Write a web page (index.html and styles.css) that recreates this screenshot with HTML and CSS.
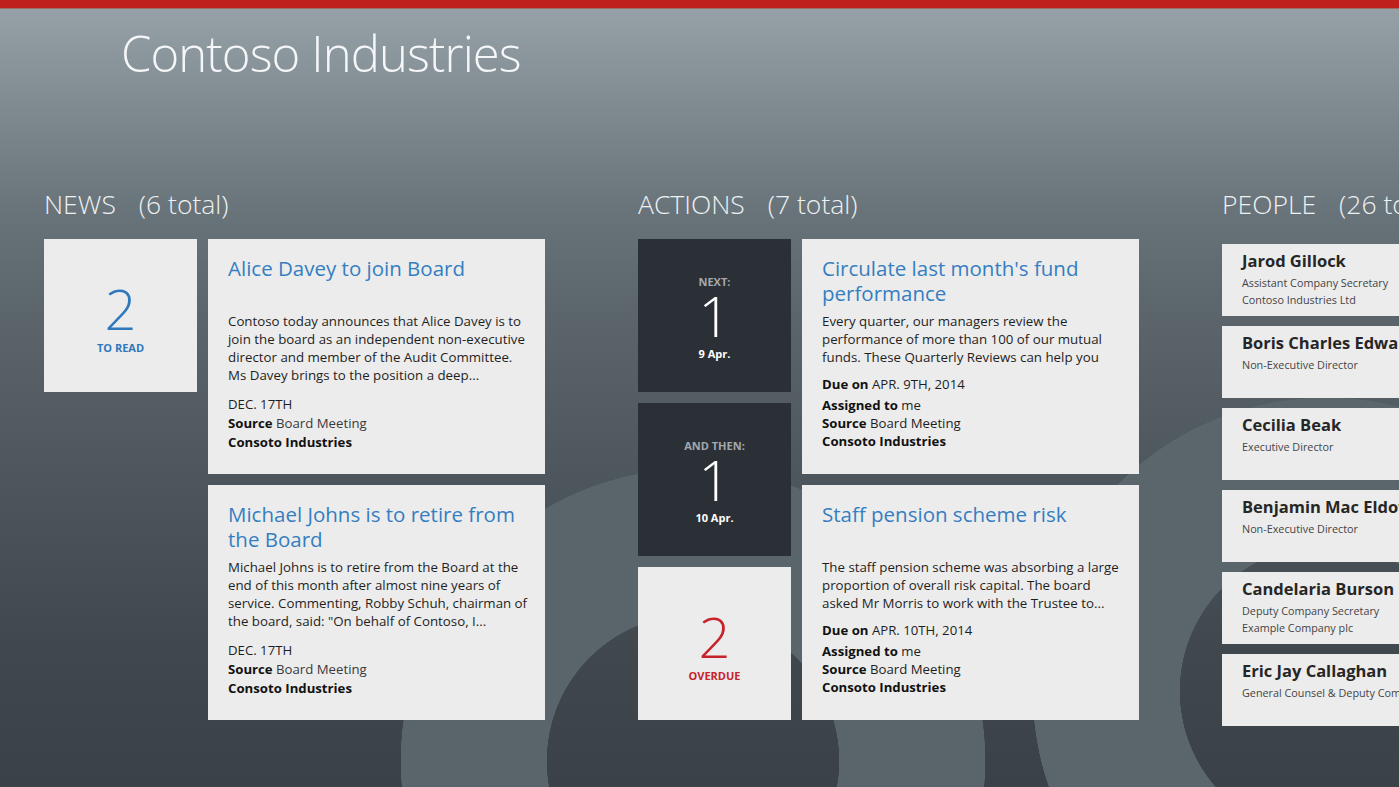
FILE: index.html
```html
<!DOCTYPE html>
<html lang="en">
<head>
<meta charset="utf-8">
<title>Contoso Industries</title>
<link rel="stylesheet" href="styles.css">
</head>
<body>
<div class="topbar"></div>
<header class="app-header">
  <h1 class="app-title">Contoso Industries</h1>
</header>
<main class="hub">
  <section class="group group-news">
    <h2 class="group-title">NEWS<span class="count">(6 total)</span></h2>
    <div class="group-body">
      <div class="tile-col">
        <div class="tile tile-light">
          <div class="tile-big blue">2</div>
          <div class="tile-sub blue">TO READ</div>
        </div>
      </div>
      <div class="card-col">
        <article class="card">
          <h3 class="card-title">Alice Davey to join Board</h3>
          <p class="card-text">Contoso today announces that Alice Davey is to<br>join the board as an independent non-executive<br>director and member of the Audit Committee.<br>Ms Davey brings to the position a deep...</p>
          <div class="meta meta-news">
            <div>DEC. 17TH</div>
            <div><b>Source</b> <span class="soft">Board Meeting</span></div>
            <div><b>Consoto Industries</b></div>
          </div>
        </article>
        <article class="card">
          <h3 class="card-title">Michael Johns is to retire from<br>the Board</h3>
          <p class="card-text">Michael Johns is to retire from the Board at the<br>end of this month after almost nine years of<br>service. Commenting, Robby Schuh, chairman of<br>the board, said: "On behalf of Contoso, I...</p>
          <div class="meta meta-news">
            <div>DEC. 17TH</div>
            <div><b>Source</b> <span class="soft">Board Meeting</span></div>
            <div><b>Consoto Industries</b></div>
          </div>
        </article>
      </div>
    </div>
  </section>

  <section class="group group-actions">
    <h2 class="group-title">ACTIONS<span class="count">(7 total)</span></h2>
    <div class="group-body">
      <div class="tile-col">
        <div class="tile tile-dark">
          <div class="tile-top">NEXT:</div>
          <div class="tile-big">1</div>
          <div class="tile-sub">9 Apr.</div>
        </div>
        <div class="tile tile-dark">
          <div class="tile-top">AND THEN:</div>
          <div class="tile-big">1</div>
          <div class="tile-sub">10 Apr.</div>
        </div>
        <div class="tile tile-light">
          <div class="tile-big red">2</div>
          <div class="tile-sub red">OVERDUE</div>
        </div>
      </div>
      <div class="card-col">
        <article class="card">
          <h3 class="card-title">Circulate last month's fund<br>performance</h3>
          <p class="card-text">Every quarter, our managers review the<br>performance of more than 100 of our mutual<br>funds. These Quarterly Reviews can help you</p>
          <div class="meta meta-action">
            <div class="due"><b>Due on</b> APR. 9TH, 2014</div>
            <div><b>Assigned to</b> me</div>
            <div><b>Source</b> Board Meeting</div>
            <div><b>Consoto Industries</b></div>
          </div>
        </article>
        <article class="card">
          <h3 class="card-title">Staff pension scheme risk</h3>
          <p class="card-text">The staff pension scheme was absorbing a large<br>proportion of overall risk capital. The board<br>asked Mr Morris to work with the Trustee to...</p>
          <div class="meta meta-action">
            <div class="due"><b>Due on</b> APR. 10TH, 2014</div>
            <div><b>Assigned to</b> me</div>
            <div><b>Source</b> Board Meeting</div>
            <div><b>Consoto Industries</b></div>
          </div>
        </article>
      </div>
    </div>
  </section>

  <section class="group group-people">
    <h2 class="group-title">PEOPLE<span class="count">(26 total)</span></h2>
    <div class="people-list">
      <div class="person">
        <div class="person-name">Jarod Gillock</div>
        <div class="person-line">Assistant Company Secretary</div>
        <div class="person-line">Contoso Industries Ltd</div>
      </div>
      <div class="person">
        <div class="person-name">Boris Charles Edwards</div>
        <div class="person-line">Non-Executive Director</div>
      </div>
      <div class="person">
        <div class="person-name">Cecilia Beak</div>
        <div class="person-line">Executive Director</div>
      </div>
      <div class="person">
        <div class="person-name">Benjamin Mac Eldowney</div>
        <div class="person-line">Non-Executive Director</div>
      </div>
      <div class="person">
        <div class="person-name">Candelaria Burson</div>
        <div class="person-line">Deputy Company Secretary</div>
        <div class="person-line">Example Company plc</div>
      </div>
      <div class="person">
        <div class="person-name">Eric Jay Callaghan</div>
        <div class="person-line">General Counsel &amp; Deputy Company Secretary</div>
      </div>
    </div>
  </section>
</main>
</body>
</html>
```

FILE: styles.css
```css
html, body {
  margin: 0;
  padding: 0;
}

body {
  width: 1399px;
  height: 787px;
  overflow: hidden;
  font-family: "Open Sans", "Noto Sans", "Liberation Sans", sans-serif;
  color: #222;
  background:
    radial-gradient(circle at 693px 761px, transparent 146px, #5a656b 146.5px, #5a656b 292px, transparent 292.5px),
    radial-gradient(circle at 1326px 691px, transparent 146px, #5b666c 146.5px, #5b666c 293px, transparent 293.5px),
    linear-gradient(to bottom, #95a1a7 9px, #7e8a90 110px, #68737a 210px, #5a646a 320px, #4c565c 480px, #40484e 650px, #3a4147 787px);
}

.topbar {
  height: 9px;
  background: #c0201b;
  border-bottom: 1px solid #9b6f66;
  box-sizing: border-box;
}

.app-header {
  padding: 20px 0 0 121px;
  height: 162px;
  box-sizing: border-box;
}

.app-title {
  margin: 0;
  font-size: 49px;
  line-height: 49px;
  font-weight: 300;
  color: #f4f6f7;
  letter-spacing: -0.9px;
}

.hub {
  display: flex;
  align-items: flex-start;
  padding-left: 44px;
  padding-top: 20px;
}

.group-news { width: 501px; margin-right: 93px; flex: none; }
.group-actions { width: 501px; margin-right: 83px; flex: none; }
.group-people { flex: none; width: 300px; }

.group-title {
  margin: 0 0 22px;
  font-size: 26.5px;
  line-height: 26px;
  font-weight: 300;
  color: #eef1f2;
  white-space: nowrap;
}

.count {
  margin-left: 23px;
}

.group-body {
  display: flex;
  gap: 11px;
}

.tile-col {
  display: flex;
  flex-direction: column;
  gap: 11px;
  width: 153px;
  flex: none;
}

.card-col {
  display: flex;
  flex-direction: column;
  gap: 11px;
  width: 337px;
  flex: none;
}

.tile {
  width: 153px;
  height: 153px;
  box-sizing: border-box;
  padding-top: 5px;
  display: flex;
  flex-direction: column;
  align-items: center;
  justify-content: center;
}

.tile-light { background: #ececec; }
.tile-dark { background: #2b3036; color: #fff; }

.tile-top {
  font-size: 11px;
  line-height: 14px;
  font-weight: 700;
  color: #a3a8ac;
}

.tile-big {
  font-size: 56px;
  line-height: 52px;
  font-weight: 300;
}

.tile-sub {
  margin-top: 6px;
  font-size: 11px;
  line-height: 14px;
  font-weight: 700;
}

.tile-light .tile-sub { margin-top: 7px; }

.blue { color: #2f78bd; }
.red { color: #c7232b; }

.card {
  height: 235px;
  box-sizing: border-box;
  background: #ececec;
  padding: 17px 20px 0;
}

.card-title {
  margin: 0;
  min-height: 50px;
  font-size: 20.5px;
  line-height: 25px;
  font-weight: 400;
  color: #357ec1;
  white-space: nowrap;
}

.card-text {
  margin: 6px 0 0;
  font-size: 13.3px;
  line-height: 18px;
  color: #1f1f1f;
  white-space: nowrap;
}

.meta {
  font-size: 13.2px;
  color: #1e1e1e;
  white-space: nowrap;
}

.meta b { font-weight: 700; color: #111; }
.soft { color: #3a3a3a; }

.meta-news {
  margin-top: 11px;
  line-height: 19px;
}

.meta-action {
  margin-top: 9px;
  line-height: 18px;
}

.meta-action .due { margin-bottom: 3px; }

.people-list {
  display: flex;
  flex-direction: column;
  gap: 10px;
  padding-top: 5px;
}

.person {
  width: 260px;
  height: 72px;
  box-sizing: border-box;
  background: #ececec;
  padding: 6px 0 0 20px;
  white-space: nowrap;
}

.person-name {
  font-size: 16.5px;
  line-height: 21px;
  font-weight: 700;
  color: #262626;
}

.person-name + .person-line { margin-top: 3px; }

.person-line {
  font-size: 10.8px;
  line-height: 17px;
  color: #444;
}
```
